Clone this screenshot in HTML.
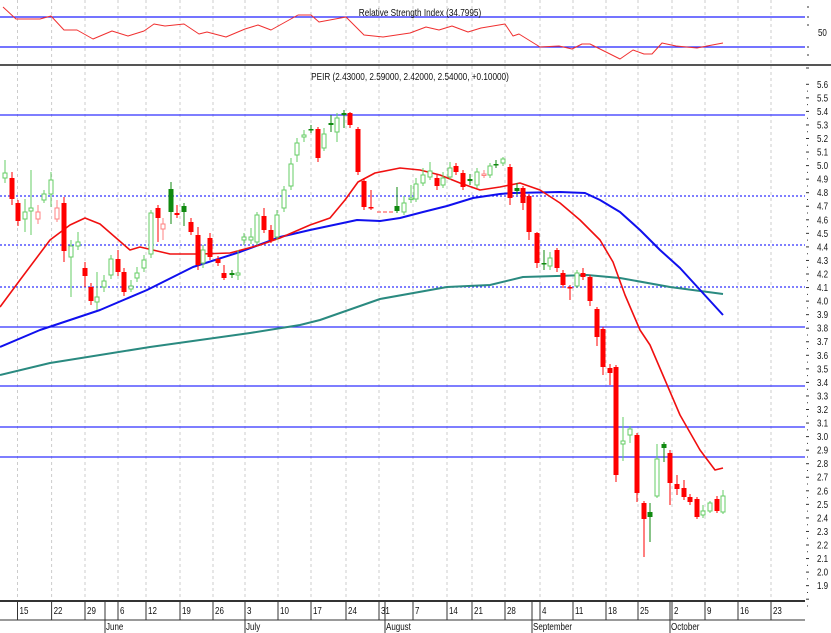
<!DOCTYPE html>
<html><head><meta charset="utf-8"><style>
html,body{margin:0;padding:0;background:#fff;width:831px;height:633px;overflow:hidden}
svg{display:block}
text{font-family:"Liberation Sans",sans-serif;font-size:10px;fill:#111}
</style></head><body>
<svg id="s" width="831" height="633" xmlns="http://www.w3.org/2000/svg"></svg>
<script>
var s='';
function L(x1,y1,x2,y2,c,w,d){s+='<line x1="'+x1+'" y1="'+y1+'" x2="'+x2+'" y2="'+y2+'" stroke="'+c+'" stroke-width="'+(w||1)+'"'+(d?' stroke-dasharray="'+d+'"':'')+'/>';}
function P(pts,c,w){s+='<polyline fill="none" stroke="'+c+'" stroke-width="'+w+'" stroke-linejoin="round" points="'+pts.map(function(p){return p.join(',')}).join(' ')+'"/>';}
function T(x,y,t,a,sx){s+='<text x="'+x+'" y="'+y+'"'+(a?' text-anchor="'+a+'"':'')+(sx?' transform="translate('+x+' 0) scale('+sx+',1) translate('+(-x)+' 0)"':'')+'>'+t+'</text>';}
var wk=[17.5,51.6,85,118,146,180,213,245,278,311,346,379,413,447,472,505,540,573,606,638,672,705,738,771];
var lbl=['15','22','29','6','12','19','26','3','10','17','24','31','7','14','21','28','4','11','18','25','2','9','16','23'];
// grid
wk.forEach(function(x){L(x,0,x,600,'#ccc',1,'3,3');});
// RSI
L(0,17,805,17,'#2020ff',1.2);L(0,47,805,47,'#2020ff',1.2);
P([[3,7],[16,19],[40,19],[51,16],[64,30],[77,30],[93,39],[112,31],[128,36],[144,31],[154,24],[165,26],[184,24],[199,34],[207,32],[226,37],[245,29],[258,25],[271,30],[298,15],[311,15],[319,22],[346,17],[364,35],[383,37],[410,33],[426,27],[439,30],[452,26],[468,32],[481,28],[505,24],[513,36],[519,34],[540,47],[559,46],[572,49],[582,44],[590,44],[606,52],[620,59],[633,50],[644,54],[652,54],[662,43],[676,46],[697,48],[707,46],[723,43]],'#f03030',1);
T(420,16,'Relative Strength Index (34.7995)','middle',0.82);
L(0,65,831,65,'#555',2);
T(410,80,'PEIR (2.43000, 2.59000, 2.42000, 2.54000, +0.10000)','middle',0.82);
// price horizontal lines
[115,327,386,427,457].forEach(function(y){L(0,y,805,y,'#3030ff',1.3);});
[196,245,287].forEach(function(y){L(0,y,805,y,'#3030ff',1.3,'2,2');});
// MAs
P([[0,375],[50,363],[100,355],[150,347],[200,340],[250,333],[300,325],[320,320],[380,299],[447,287],[490,285],[523,277],[557,276],[587,275],[620,278],[670,287],[723,294]],'#2a8a80',2);
P([[0,347],[40,330],[100,310],[147,290],[193,267],[240,252],[280,237],[310,230],[343,223],[357,220],[380,221],[400,218],[423,212],[447,206],[473,198],[500,194],[513,193],[560,192],[585,193],[600,200],[620,212],[640,230],[660,250],[680,268],[723,315]],'#1010ee',2);
P([[0,307],[20,280],[50,240],[70,225],[85,218],[100,224],[130,250],[140,247],[170,254],[200,254],[230,253],[260,245],[280,238],[310,225],[330,218],[345,200],[358,182],[375,173],[400,168],[420,170],[440,175],[460,183],[480,190],[500,187],[520,183],[540,190],[560,203],[580,220],[600,240],[613,262],[625,295],[640,330],[650,345],[665,380],[680,415],[700,450],[715,470],[723,468]],'#f01010',1.6);
// candles x,top,bottom,hi,lo,type
var C=[[5,173,178,160,183,'g'],[12,178,199,172,205,'r'],[18,203,221,200,226,'r'],[25,212,219,199,232,'g'],[31,208,211,170,235,'g'],[38,212,219,205,224,'p'],[44,194,200,190,203,'g'],[51,180,194,172,207,'g'],[57,208,219,200,222,'p'],[64,203,251,197,262,'r'],[71,246,257,240,297,'g'],[78,242,246,232,250,'g'],[85,268,276,262,287,'r'],[91,287,301,283,305,'r'],[97,297,302,272,310,'g'],[104,281,287,275,292,'g'],[111,259,275,255,279,'g'],[118,259,272,250,276,'r'],[124,272,292,268,296,'r'],[131,286,289,280,292,'g'],[137,273,278,267,282,'g'],[144,260,268,255,272,'g'],[151,213,254,210,258,'g'],[158,208,218,205,242,'r'],[163,224,229,218,240,'p'],[171,189,212,182,224,'G'],[177,213,215,205,218,'r'],[184,206,212,203,226,'G'],[191,222,232,218,235,'r'],[198,235,265,227,270,'r'],[203,250,263,245,268,'g'],[210,238,257,233,260,'r'],[218,259,263,256,266,'r'],[224,273,278,265,280,'r'],[232,273,275,270,278,'G'],[238,273,275,250,280,'g'],[244,237,240,233,245,'g'],[251,237,240,228,244,'g'],[257,215,242,212,245,'g'],[264,216,230,208,233,'r'],[271,230,240,225,243,'r'],[277,215,237,210,240,'g'],[284,190,208,186,212,'g'],[291,164,186,158,190,'g'],[297,143,155,138,162,'g'],[304,135,137,130,142,'g'],[311,129,130,125,133,'G'],[318,129,158,127,162,'r'],[324,134,148,128,151,'g'],[331,123,125,115,132,'G'],[337,118,132,113,142,'g'],[344,113,115,110,128,'G'],[350,113,125,112,128,'r'],[358,129,172,127,175,'r'],[364,181,207,178,210,'r'],[371,207,208,190,210,'r'],[397,206,211,187,213,'G'],[404,203,212,196,215,'g'],[411,198,199,185,203,'g'],[416,184,199,178,202,'g'],[423,175,183,168,186,'g'],[430,171,177,162,180,'g'],[437,178,186,175,190,'r'],[443,178,185,172,188,'g'],[450,168,177,162,180,'g'],[456,166,172,163,175,'r'],[463,173,187,170,190,'r'],[470,179,181,174,185,'G'],[477,172,185,168,188,'g'],[484,174,175,170,178,'p'],[490,166,175,163,178,'g'],[496,164,165,160,168,'G'],[503,159,163,157,166,'g'],[510,167,198,164,205,'r'],[517,188,191,183,195,'G'],[523,188,203,186,210,'r'],[529,196,232,194,240,'r'],[537,233,263,232,268,'r'],[544,263,264,250,270,'G'],[550,258,266,252,270,'g'],[557,250,268,248,272,'r'],[563,273,285,270,288,'r'],[570,287,288,285,300,'r'],[577,273,286,270,288,'g'],[583,273,277,268,280,'r'],[590,277,301,275,306,'r'],[597,309,337,307,346,'r'],[603,329,367,327,375,'r'],[610,368,373,364,385,'r'],[616,367,475,365,482,'r'],[623,441,444,417,461,'g'],[630,429,435,426,443,'g'],[637,435,493,433,502,'r'],[644,503,519,501,557,'r'],[650,512,517,503,542,'G'],[657,459,496,444,498,'g'],[664,444,448,442,462,'G'],[670,453,483,450,505,'r'],[677,484,489,475,495,'r'],[684,488,497,480,500,'r'],[690,497,502,494,505,'r'],[697,499,517,497,519,'r'],[703,511,515,505,518,'g'],[710,503,511,501,513,'g'],[717,499,511,496,513,'r'],[723,496,512,490,514,'g']];
C.forEach(function(c){var x=c[0],t=c[5],col=t=='r'?'#ff0000':t=='G'?'#108a10':t=='p'?'#ff8080':'#66cc66';
L(x,c[3],x,c[4],col,1);
var h=Math.max(c[2]-c[1],1.5);
if(t=='r'||t=='G')s+='<rect x="'+(x-2.5)+'" y="'+c[1]+'" width="5" height="'+h+'" fill="'+col+'"/>';
else s+='<rect x="'+(x-2)+'" y="'+c[1]+'" width="4" height="'+h+'" fill="#fff" stroke="'+col+'" stroke-width="1"/>';});
s+='<line x1="377" y1="212" x2="393" y2="212" stroke="#ff8080" stroke-width="1.5" stroke-dasharray="4,2"/>';
// right axis
for(var p=56;p>=18;p--){var y=274+(4.2-p/10)*135.5;L(806,y,809,y,'#333',1);L(807,y+6.8,808,y+6.8,'#333',1);
 if(p>=19) T(817,y+3.5,(p/10).toFixed(1),null,0.8);}
L(806,68,809,68,'#333',1);
[7,17,25,47,55].forEach(function(y){L(807,y,809,y,'#333',1);});
T(818,36,'50',null,0.8);
// bottom axis
L(0,601,805,601,'#333',2);L(0,620,805,620,'#333',1);
wk.forEach(function(x,i){L(x,601,x,620,'#333',1);T(x+2,614,lbl[i],null,0.8);});
[[105,'June'],[245,'July'],[385,'August'],[532,'September'],[670,'October']].forEach(function(m){L(m[0],620,m[0],633,'#333',1);L(m[0],601,m[0],620,'#333',1);T(m[0]+1,630,m[1],null,0.8);});
document.getElementById('s').innerHTML=s;
</script>
</body></html>
